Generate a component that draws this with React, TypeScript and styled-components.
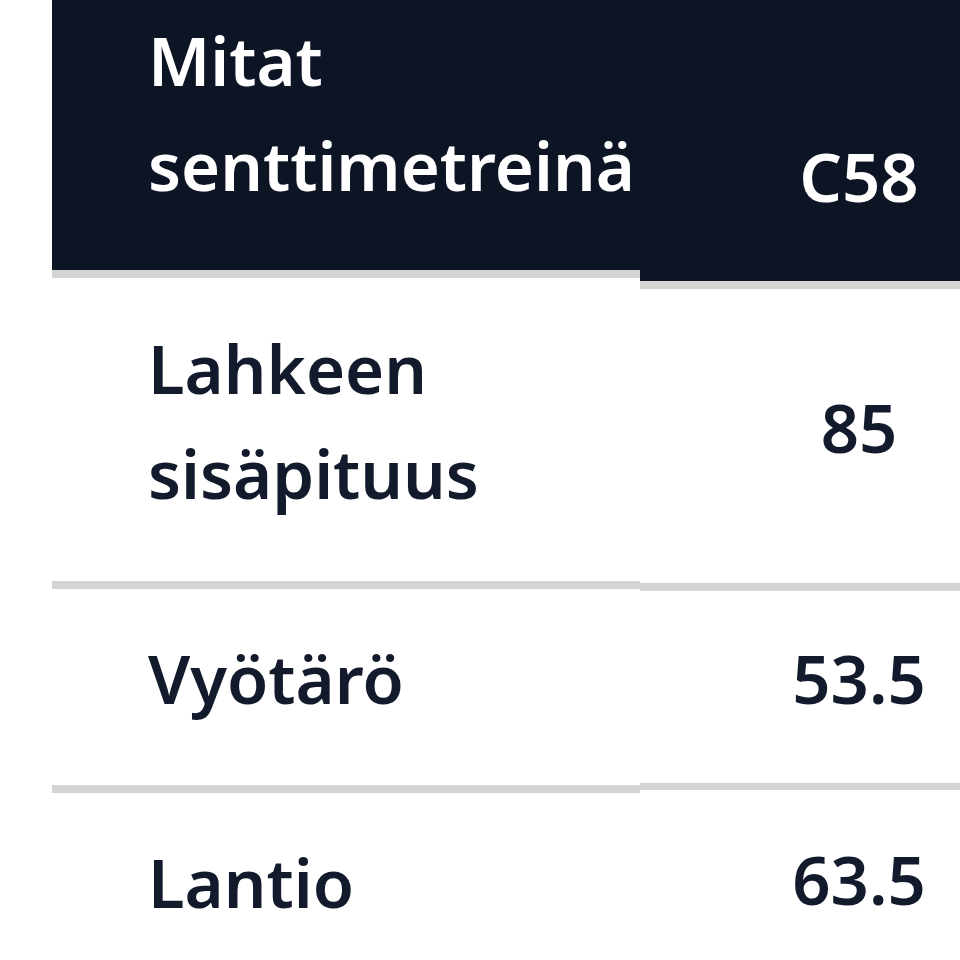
import { createGlobalStyle, styled } from 'styled-components';

const GlobalStyle = createGlobalStyle`
  html, body {
    margin: 0;
    padding: 0;
    background: #ffffff;
    overflow: hidden;
  }
  body {
    font-family: "Noto Sans", Inter, sans-serif;
  }
`;

const Page = styled.div`
  width: 960px;
  height: 960px;
  overflow: hidden;
`;

const Table = styled.div`
  display: flex;
  margin: -48px 0 0 52px;
`;

const Column = styled.div<{ $width: number }>`
  display: flex;
  flex-direction: column;
  flex: 0 0 ${(p) => p.$width}px;
  width: ${(p) => p.$width}px;
  min-width: 0;
`;

const Cell = styled.div<{
  $height: number;
  $border?: number;
  $header?: boolean;
  $center?: boolean;
}>`
  box-sizing: border-box;
  display: flex;
  flex-direction: column;
  justify-content: ${(p) => (p.$header ? 'flex-end' : 'center')};
  align-items: ${(p) => (p.$center ? 'center' : 'flex-start')};
  height: ${(p) => p.$height + (p.$border ?? 0)}px;
  padding: ${(p) => (p.$header ? '0 0 52px' : '0 0 18px')};
  padding-left: ${(p) => (p.$center ? '0' : '96px')};
  background: ${(p) => (p.$header ? '#0d1424' : '#ffffff')};
  color: ${(p) => (p.$header ? '#ffffff' : '#121a2c')};
  border-bottom: ${(p) => p.$border ?? 0}px solid #d4d4d4;
  font-size: 67px;
  font-weight: 600;
  line-height: 105px;
`;

const Line = styled.span`
  display: block;
  white-space: nowrap;
`;

export default function App() {
  return (
    <Page>
      <GlobalStyle />
      <Table>
        <Column $width={588}>
          <Cell $header $height={318} $border={8}>
            <Line>Mitat</Line>
            <Line>senttimetreinä</Line>
          </Cell>
          <Cell $height={303} $border={8}>
            <Line>Lahkeen</Line>
            <Line>sisäpituus</Line>
          </Cell>
          <Cell $height={196} $border={8}>
            <Line>Vyötärö</Line>
          </Cell>
          <Cell $height={196}>
            <Line>Lantio</Line>
          </Cell>
        </Column>
        <Column $width={438}>
          <Cell $header $center $height={329} $border={8}>
            <Line>C58</Line>
          </Cell>
          <Cell $center $height={294} $border={8}>
            <Line>85</Line>
          </Cell>
          <Cell $center $height={192} $border={7}>
            <Line>53.5</Line>
          </Cell>
          <Cell $center $height={196}>
            <Line>63.5</Line>
          </Cell>
        </Column>
      </Table>
    </Page>
  );
}
